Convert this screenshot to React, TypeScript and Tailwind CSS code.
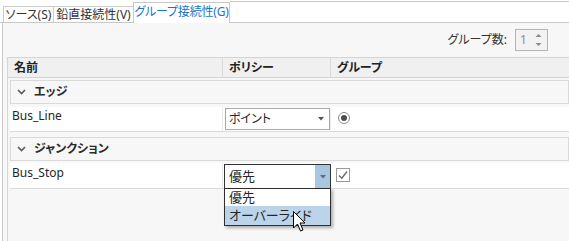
import React from 'react';

function Tab({ width, children }: { width: string; children: React.ReactNode }) {
  return (
    <div className={`${width} flex h-[16px] items-center justify-center whitespace-nowrap border border-b-0 border-r-0 border-[#cccccc] bg-white text-[#333333]`}>
      {children}
    </div>
  );
}

function Chevron() {
  return (
    <svg width="9" height="6" viewBox="0 0 9 6" className="text-[#5a5a5a]">
      <path d="M1 1 L4.5 4.5 L8 1" fill="none" stroke="currentColor" strokeWidth="1.6" />
    </svg>
  );
}

function GroupRow({ label, className }: { label: string; className: string }) {
  return (
    <div className={`${className} flex h-[24px] items-center border border-[#dadada] bg-[#f7f7f7] pl-[6px]`}>
      <Chevron />
      <span className="ml-[8px] font-semibold text-[#2b2b2b]">{label}</span>
    </div>
  );
}

export default function App() {
  return (
    <div className="relative h-[241px] w-[569px] overflow-hidden bg-white text-[12px] leading-none text-[#262626] font-['Segoe_UI','Noto_Sans','Noto_Sans_CJK_JP',sans-serif] [font-feature-settings:'palt']">
      {/* Tabs */}
      <div className="flex h-[23px] items-end border-b border-[#c8c8c8] pl-[3px]">
        <Tab width="w-[50px]">ソース(S)</Tab>
        <Tab width="w-[80px]">鉛直接続性(V)</Tab>
        <div className="relative -mb-px flex h-[21px] w-[97px] items-center justify-center whitespace-nowrap border border-b-0 border-[#c8c8c8] bg-white pb-[2px] tracking-[-0.2px] text-[#1675cc]">
          グループ接続性(G)
        </div>
        <div className="h-[21px] flex-1 border-t border-[#c8c8c8]" />
      </div>

      {/* Panel */}
      <div className="ml-[2px] flex h-[218px] flex-col border-l border-[#c8c8c8] bg-[#f7f7f7]">
        <div className="flex h-[34px] shrink-0 items-center justify-end gap-[8px] pr-[21px]">
          <span className="text-[#333333]">グループ数:</span>
          <div className="flex h-[22px] w-[33px] items-center justify-between border border-[#b4b4b4] bg-[#f2f2f2] pl-[4px] pr-[5px]">
            <span className="text-[#8c8c8c]">1</span>
            <svg width="7" height="14" viewBox="0 0 7 14" className="text-[#8c8c8c]">
              <path d="M0.5 4 L3.5 1 L6.5 4 Z" fill="currentColor" />
              <path d="M0.5 10 L3.5 13 L6.5 10 Z" fill="currentColor" />
            </svg>
          </div>
        </div>

        {/* Grid */}
        <div className="ml-[4px] flex-1 border-l border-t border-[#d4d4d4]">
          <div className="flex h-[20px] items-center border-b border-[#d4d4d4] bg-[#f0f0f0] font-bold text-[#222222]">
            <div className="flex h-full w-[215px] items-center border-r border-[#d9d9d9] pl-[6px]">名前</div>
            <div className="flex h-full w-[108px] items-center border-r border-[#d9d9d9] pl-[6px]">ポリシー</div>
            <div className="flex h-full items-center pl-[6px]">グループ</div>
          </div>

          <div className="ml-[2px]">
            <GroupRow label="エッジ" className="mt-[2px]" />

            <div className="mt-[3px] flex h-[25px] border-b border-[#dadada] bg-white">
              <div className="w-[213px] border-r border-[#ececec] pl-[2px] pt-[3px]">Bus_Line</div>
              <div className="w-[108px] border-r border-[#ececec]">
                <div className="ml-[2px] mt-px flex h-[22px] w-[105px] items-center justify-between border border-[#a8a8a8] bg-white pl-[3px] pr-[5px]">
                  <span>ポイント</span>
                  <svg width="6" height="4" viewBox="0 0 6 4"><path d="M0 0 L6 0 L3 3.5 Z" fill="#555555" /></svg>
                </div>
              </div>
              <div className="pl-[7px] pt-[5px]">
                <svg width="12" height="12" viewBox="0 0 12 12">
                  <circle cx="6" cy="6" r="5.5" fill="white" stroke="#8a8a8a" />
                  <circle cx="6" cy="6" r="3" fill="#4d4d4d" />
                </svg>
              </div>
            </div>

            <GroupRow label="ジャンクション" className="mt-[5px]" />

            <div className="mt-[2px] flex h-[26px] border-b border-[#dadada] bg-white">
              <div className="w-[213px] border-r border-[#ececec] pl-[2px] pt-[4px]">Bus_Stop</div>
              <div className="w-[108px]">
                <div className="relative z-10 ml-px mt-px flex h-[25px] w-[107px] border border-[#333333] bg-white">
                  <span className="flex flex-1 items-center pl-[4px] text-[13px]">優先</span>
                  <div className="flex w-[15px] items-center justify-center bg-[#a9c6e1]">
                    <svg width="6" height="4" viewBox="0 0 6 4"><path d="M0 0 L6 0 L3 3.5 Z" fill="#5b6b7a" /></svg>
                  </div>
                  {/* open list */}
                  <div className="absolute left-[-1px] top-full w-[107px] border border-[#2e2e2e] bg-white shadow-[2px_2px_3px_rgba(0,0,0,0.3)]">
                    <div className="flex h-[17px] items-center pl-[4px] text-[13px]">優先</div>
                    <div className="flex h-[19px] items-center bg-[#bcd4ea] pl-[4px] text-[13px]">オーバーライド</div>
                  </div>
                </div>
              </div>
              <div className="pl-[5px] pt-[5px]">
                <div className="flex h-[14px] w-[14px] items-center justify-center border border-[#9a9a9a] bg-white">
                  <svg width="10" height="10" viewBox="0 0 10 10">
                    <path d="M1 5.5 L3.8 8.3 L9 1.5" fill="none" stroke="#6a6a6a" strokeWidth="1.4" />
                  </svg>
                </div>
              </div>
            </div>
          </div>
        </div>
      </div>

      {/* mouse pointer */}
      <svg className="absolute left-[293px] top-[211px] z-20" width="14" height="22" viewBox="0 0 14 22">
        <path d="M0.5 0.5 L0.5 17 L4.5 13 L7.5 20 L10 19 L7 12 L12 12 Z" fill="white" stroke="black" strokeWidth="1" strokeLinejoin="round" />
      </svg>
    </div>
  );
}
